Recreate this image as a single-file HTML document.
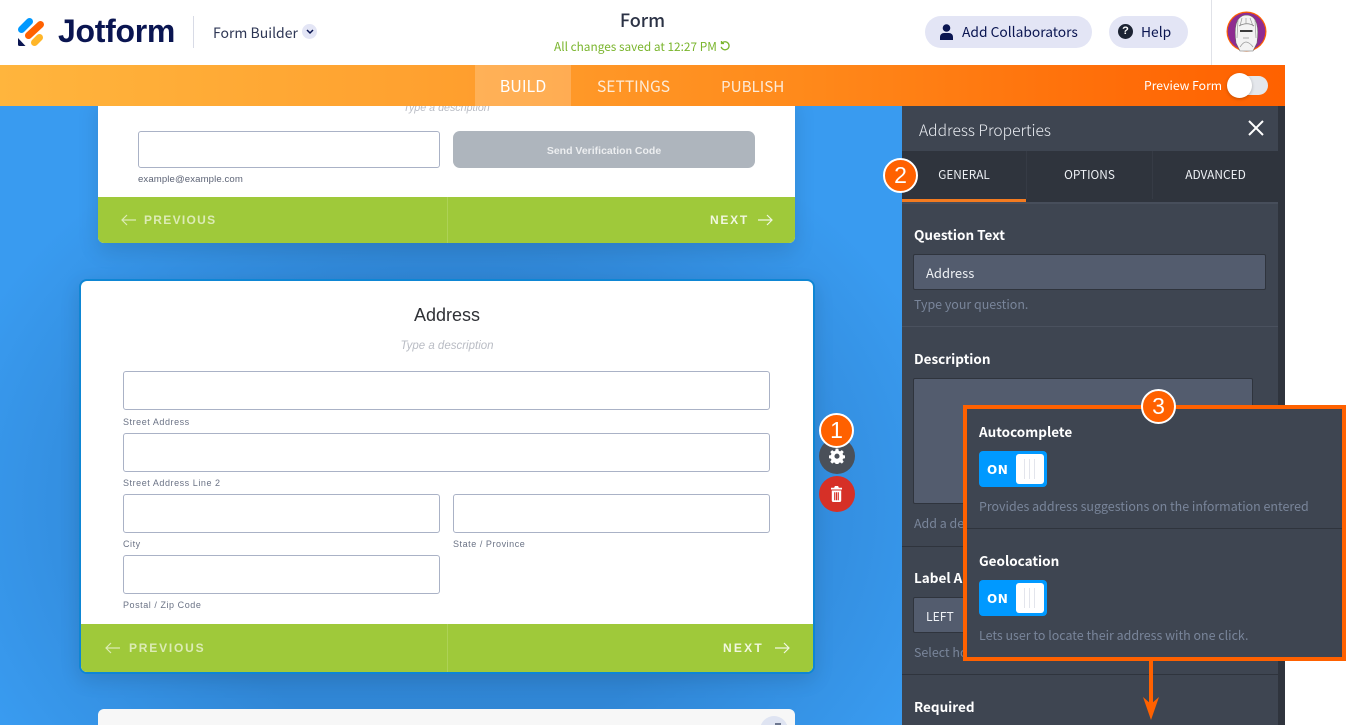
<!DOCTYPE html>
<html><head><meta charset="utf-8"><style>
html,body{margin:0;padding:0;background:#fff}
#p{position:relative;width:1346px;height:725px;overflow:hidden;background:#fff;font-family:"Liberation Sans",sans-serif}
#p div,#p svg,#p span.a{position:absolute}
.t{white-space:nowrap;line-height:1}
.n{font-family:"Noto Sans CJK SC","Liberation Sans",sans-serif}
.lb{font-family:"Noto Sans CJK SC","Liberation Sans",sans-serif;font-weight:700;color:#fff;font-size:13.5px;white-space:nowrap;line-height:1}
.h{font-family:"Noto Sans CJK SC","Liberation Sans",sans-serif;color:#79859a;font-size:12.45px;white-space:nowrap;line-height:1}
.i{background:#fff;border:1px solid #aab2c6;border-radius:3px;box-sizing:border-box}
.s{font-size:9px;color:#6a7285;white-space:nowrap;line-height:1;letter-spacing:.55px}
.nav{font-size:12px;font-weight:700;white-space:nowrap;line-height:1}
.c{border-radius:50%;background:#ff6100;border:2px solid #fff;box-sizing:border-box;color:#fff;text-align:center;font-size:23px;line-height:31px}
.tog{background:#0099ff;border-radius:4px;width:68px;height:36px}
.tk{left:37px;top:3px;width:28px;height:30px;background:#fff;border-radius:3px}
.tk i{position:absolute;top:5px;width:1px;height:20px;background:#e3e5ec}
.on{left:8px;top:13px;color:#fff;font:700 12px "DejaVu Sans",sans-serif;line-height:1;letter-spacing:.5px;white-space:nowrap}
</style></head><body><div id="p">

<!-- canvas -->
<div style="left:0;top:106px;width:902px;height:619px;background:radial-gradient(ellipse 520px 420px at 450px 400px,#2f84d2 0%,#3086d5 55%,#399bf0 100%)"></div>

<!-- top card -->
<div style="left:98px;top:96px;width:697px;height:147px;background:#fff;border-radius:6px;box-shadow:0 8px 22px rgba(0,0,0,.12);overflow:hidden">
  <div class="t" style="left:0;width:697px;top:7px;text-align:center;font-size:10.7px;font-style:italic;color:#b9bcc4">Type a description</div>
  <div class="i" style="left:40px;top:35px;width:302px;height:37px"></div>
  <div class="t" style="left:40px;top:79px;font-size:9.6px;color:#5d6476;letter-spacing:.1px">example@example.com</div>
  <div style="left:355px;top:35px;width:302px;height:37px;background:#aeb5bd;border-radius:7px"></div>
  <div class="t" style="left:355px;width:302px;top:49px;padding-top:1px;text-align:center;font-size:10.5px;font-weight:700;color:#eceef0">Send Verification Code</div>
  <div style="left:0;top:101px;width:697px;height:46px;background:#9fc93a"></div>
  <div style="left:349px;top:101px;width:1px;height:46px;background:#add256"></div>
  <svg style="left:23px;top:118px" width="15" height="12" viewBox="0 0 15 12" fill="none" stroke="#dcebb5" stroke-width="1.2"><path d="M15 6H1M6 1L1 6l5 5"/></svg>
  <div class="nav" style="left:46px;top:118px;color:#dcebb5;letter-spacing:1.3px">PREVIOUS</div>
  <div class="nav" style="left:612px;top:118px;color:#f1f7df;letter-spacing:1.75px">NEXT</div>
  <svg style="left:660px;top:118px" width="15" height="12" viewBox="0 0 15 12" fill="none" stroke="#f1f7df" stroke-width="1.2"><path d="M0 6h14M9 1l5 5-5 5"/></svg>
</div>

<!-- selected card -->
<div style="left:79px;top:279px;width:736px;height:395px;background:#0e86d4;border-radius:8px;box-shadow:0 6px 20px rgba(0,0,0,.12)"></div>
<div style="left:81px;top:281px;width:732px;height:391px;background:#fff;border-radius:6px;overflow:hidden">
  <div class="t" style="left:0;width:732px;top:25px;text-align:center;font-size:18px;color:#2f3136">Address</div>
  <div class="t" style="left:0;width:732px;top:59px;padding-top:1px;text-align:center;font-size:11.5px;font-style:italic;color:#b9bcc4">Type a description</div>
  <div class="i" style="left:42px;top:90px;width:647px;height:39px"></div>
  <div class="s" style="left:42px;top:137px">Street Address</div>
  <div class="i" style="left:42px;top:152px;width:647px;height:39px"></div>
  <div class="s" style="left:42px;top:198px">Street Address Line 2</div>
  <div class="i" style="left:42px;top:213px;width:317px;height:39px"></div>
  <div class="s" style="left:42px;top:259px">City</div>
  <div class="i" style="left:372px;top:213px;width:317px;height:39px"></div>
  <div class="s" style="left:372px;top:259px">State / Province</div>
  <div class="i" style="left:42px;top:274px;width:317px;height:39px"></div>
  <div class="s" style="left:42px;top:320px">Postal / Zip Code</div>
  <div style="left:-1px;top:343px;width:735px;height:48px;background:#9fc93a"></div>
  <div style="left:366px;top:343px;width:1px;height:48px;background:#add256"></div>
  <svg style="left:24px;top:361px" width="15" height="12" viewBox="0 0 15 12" fill="none" stroke="#dcebb5" stroke-width="1.2"><path d="M15 6H1M6 1L1 6l5 5"/></svg>
  <div class="nav" style="left:48px;top:361px;color:#dcebb5;letter-spacing:1.8px">PREVIOUS</div>
  <div class="nav" style="left:642px;top:361px;color:#f1f7df;letter-spacing:2.25px">NEXT</div>
  <svg style="left:693px;top:361px" width="16" height="12" viewBox="0 0 16 12" fill="none" stroke="#f1f7df" stroke-width="1.2"><path d="M1 6h14M10 1l5 5-5 5"/></svg>
</div>

<!-- bottom card -->
<div style="left:98px;top:709px;width:697px;height:30px;background:#f7f7f7;border-radius:6px 6px 0 0"></div>
<div style="left:760px;top:716px;width:28px;height:28px;border-radius:50%;background:#dfe4f2"></div>
<div style="left:775px;top:723px;width:6px;height:2px;background:#6d7790"></div>

<!-- side buttons -->
<div style="left:819px;top:438px;width:36px;height:36px;border-radius:50%;background:#4a5059"></div>
<svg style="left:829px;top:448px" width="16" height="16" viewBox="0 0 24 24"><path fill="#fff" fill-rule="evenodd" d="M10 1h4l.6 3.100 2 .9L19.300 3.200l2.800 2.800-1.800 2.700.9 2 3 .6v4l-3 .6-.9 2 1.800 2.700-2.800 2.800-2.700-1.800-2 .9-.6 3h-4l-.6-3-2-.9-2.700 1.800-2.800-2.800 1.800-2.700-.9-2-3-.6v-4l3-.6.9-2L1.900 6l2.800-2.800L7.400 5l2-.9zM12 8.500a3.800 3.800 0 1 0 0 7.600 3.800 3.800 0 0 0 0-7.600z"/></svg>
<div style="left:819px;top:476px;width:36px;height:36px;border-radius:50%;background:#d63027"></div>
<svg style="left:831px;top:486px" width="11" height="16" viewBox="0 0 14 18" preserveAspectRatio="none"><path fill="#fff" fill-rule="evenodd" d="M5 0h4l1 2h4v2H0V2h4zM1 5h12v11a2 2 0 0 1-2 2H3a2 2 0 0 1-2-2zM4 7v9h1.500V7zM6.300 7v9h1.400V7zM8.500 7v9H10V7z"/></svg>
<div class="c" style="left:819px;top:413px;width:35px;height:35px">1</div>

<!-- right panel -->
<div style="left:902px;top:106px;width:376px;height:619px;background:#3e4551"></div>
<div style="left:1278px;top:106px;width:7px;height:619px;background:#2f343d"></div>
<div class="t n" style="left:919px;top:123px;font-size:15.6px;font-weight:300;color:#e8ebf0">Address Properties</div>
<svg style="left:1247px;top:119px" width="18" height="18" viewBox="0 0 18 18" stroke="#fff" stroke-width="2" fill="none"><path d="M2 2l14 14M16 2L2 16"/></svg>
<div style="left:902px;top:151px;width:376px;height:51px;background:#2f343d"></div>
<div style="left:902px;top:199px;width:124px;height:3px;background:#f47b20"></div>
<div style="left:1026px;top:151px;width:1px;height:48px;background:#363b45"></div>
<div style="left:1152px;top:151px;width:1px;height:48px;background:#363b45"></div>
<div style="left:902px;top:202px;width:376px;height:2px;background:#474e5b"></div>
<div class="t n" style="left:902px;width:124px;top:169px;text-align:center;font-size:11.8px;color:#eef1f5">GENERAL</div>
<div class="t n" style="left:1027px;width:125px;top:169px;text-align:center;font-size:11.8px;color:#eef1f5">OPTIONS</div>
<div class="t n" style="left:1153px;width:125px;top:169px;text-align:center;font-size:11.9px;color:#eef1f5">ADVANCED</div>
<div class="c" style="left:883px;top:158px;width:35px;height:35px;font-size:23px">2</div>

<div class="lb" style="left:914px;top:228px">Question Text</div>
<div style="left:913px;top:254px;width:353px;height:36px;background:#535c6e;border:1px solid #2f343d;box-sizing:border-box;border-radius:2px"></div>
<div class="t n" style="left:926px;top:266px;font-size:13px;color:#eef1f5">Address</div>
<div class="h" style="left:914px;top:298px">Type your question.</div>
<div style="left:902px;top:326px;width:376px;height:1px;background:#4a515e"></div>
<div class="lb" style="left:914px;top:352px">Description</div>
<div style="left:913px;top:378px;width:340px;height:126px;background:#535c6e;border:1px solid #2f343d;box-sizing:border-box;border-radius:2px"></div>
<div class="h" style="left:914px;top:517px">Add a description</div>
<div style="left:902px;top:546px;width:376px;height:1px;background:#2f343d"></div>
<div class="lb" style="left:914px;top:571px">Label Alignment</div>
<div style="left:913px;top:597px;width:120px;height:36px;background:#535c6e;border:1px solid #2f343d;box-sizing:border-box;border-radius:2px"></div>
<div class="t n" style="left:926px;top:610px;font-size:12.2px;color:#eef1f5">LEFT</div>
<div class="h" style="left:914px;top:646px">Select how</div>
<div style="left:902px;top:674px;width:376px;height:1px;background:#2f343d"></div>
<div class="lb" style="left:914px;top:700px">Required</div>

<!-- header -->
<svg style="left:17px;top:17px" width="28" height="30" viewBox="0 0 28 30" fill="none" stroke-linecap="round" stroke-width="7">
  <path d="M4.500 12.500L12.500 4.500" stroke="#0099ff"/>
  <path d="M11.500 18.500L23.500 7.500" stroke="#ff6100"/>
  <path d="M17.500 25.500L22.500 20.500" stroke="#ffb629"/>
  <path d="M1 21L8.500 29H2.500A1.500 1.500 0 0 1 1 27.500z" fill="#0a1551" stroke="none"/>
</svg>
<div class="t" style="left:58px;top:15px;font-size:32px;font-weight:700;color:#0a1551;letter-spacing:-.3px">Jotform</div>
<div style="left:193px;top:16px;width:1px;height:32px;background:#d8dbe6"></div>
<div class="t n" style="left:213px;top:26px;font-size:14px;color:#2d3654">Form Builder</div>
<div style="left:302px;top:24px;width:15px;height:15px;border-radius:50%;background:#e3e5f5"></div>
<svg style="left:306px;top:29px" width="8" height="6" viewBox="0 0 8 6" fill="none" stroke="#0a1551" stroke-width="1.500"><path d="M1 1l3 3 3-3"/></svg>
<div class="t n" style="left:0;width:1285px;top:11px;text-align:center;font-size:18px;font-weight:500;color:#2b3245">Form</div>
<div class="t n" style="left:554px;top:41px;font-size:11.85px;color:#7ab52d">All changes saved at 12:27 PM</div>
<svg style="left:719px;top:40px" width="12" height="12" viewBox="0 0 12 12" fill="none" stroke="#7ab52d" stroke-width="1.300"><path d="M3 3.200a4 4 0 1 1-.8 3.600M2.500 1v2.500H5"/></svg>

<div style="left:925px;top:16px;width:167px;height:32px;border-radius:16px;background:#e3e5f5"></div>
<svg style="left:939px;top:24px" width="15" height="16" viewBox="0 0 15 16" fill="#0a1551"><circle cx="7.500" cy="4" r="3.800"/><path d="M1 16v-3a4 4 0 0 1 4-4h5a4 4 0 0 1 4 4v3z"/></svg>
<div class="t n" style="left:962px;top:25px;font-size:13.8px;color:#0a1551">Add Collaborators</div>
<div style="left:1109px;top:16px;width:79px;height:32px;border-radius:16px;background:#e3e5f5"></div>
<div style="left:1118px;top:24px;width:15px;height:15px;border-radius:50%;background:#1c2333;color:#fff;font-size:11px;font-weight:700;line-height:15px;text-align:center">?</div>
<div class="t n" style="left:1141px;top:25px;font-size:13.8px;color:#0a1551">Help</div>
<div style="left:1211px;top:0;width:1px;height:65px;background:#e0e2e8"></div>
<svg style="left:1226px;top:11px" width="41" height="41" viewBox="0 0 41 41">
  <circle cx="20.500" cy="20.500" r="20" fill="#ff6100"/><circle cx="20.500" cy="20.500" r="18.800" fill="#8e2b91"/>
  <path d="M10 32C8 18 9 5 20 4c12 0 13 14 11 28l-4 8H14z" fill="#f3f3f3" stroke="#666" stroke-width=".6"/>
  <path d="M13 15c5-3 11-3 15 0" stroke="#777" stroke-width=".8" fill="none"/>
  <path d="M14 20h4.500M22 20h4.500M18.500 20h3.500" stroke="#222" stroke-width="1.800" fill="none"/>
  <path d="M17 27h6M14 36c2-3 4-5 6-5s5 2 7 5M12 9l-1 18M29 9l1 18M20 7v6M16 7l-2 8M24 7l3 8" stroke="#999" stroke-width=".7" fill="none"/>
</svg>

<!-- orange nav -->
<div style="left:0;top:65px;width:1285px;height:41px;background:linear-gradient(90deg,#ffb53d 0%,#ff9f2e 36%,#ff8a1b 62%,#ff6c08 88%,#ff6100 100%)"></div>
<div style="left:475px;top:65px;width:96px;height:41px;background:rgba(255,255,255,.2)"></div>
<div class="t n" style="left:475px;width:96px;top:77px;text-align:center;font-size:16px;color:#fff">BUILD</div>
<div class="t n" style="left:597px;top:79px;font-size:15.6px;color:#fdebd8">SETTINGS</div>
<div class="t n" style="left:721px;top:79px;font-size:15.2px;color:#fdebd8">PUBLISH</div>
<div class="t n" style="left:1144px;top:79px;font-size:12.2px;color:#fff">Preview Form</div>
<div style="left:1228px;top:76px;width:40px;height:19px;border-radius:10px;background:#e4e7ec"></div>
<div style="left:1227px;top:73px;width:25px;height:25px;border-radius:50%;background:#fff;box-shadow:0 1px 3px rgba(0,0,0,.25)"></div>

<!-- annotation box -->
<div style="left:963px;top:405px;width:383px;height:256px;box-sizing:border-box;border:4px solid #ff6100;background:#3e4551"></div>
<div style="left:967px;top:528px;width:375px;height:1px;background:#2f343d"></div>
<div style="left:1149px;top:661px;width:4px;height:46px;background:#ff6100"></div>
<svg style="left:1143px;top:697px" width="16" height="24" viewBox="0 0 16 24"><path d="M0 0L8 7l8-7-8 23z" fill="#ff6100"/></svg>
<div class="c" style="left:1141px;top:389px;width:35px;height:35px">3</div>
<div class="lb" style="left:979px;top:425px">Autocomplete</div>
<div class="tog" style="left:979px;top:451px"><div class="on">ON</div><div class="tk"><i style="left:8px"></i><i style="left:13px"></i><i style="left:18px"></i></div></div>
<div class="h" style="left:979px;top:500px">Provides address suggestions on the information entered</div>
<div class="lb" style="left:979px;top:554px">Geolocation</div>
<div class="tog" style="left:979px;top:580px"><div class="on">ON</div><div class="tk"><i style="left:8px"></i><i style="left:13px"></i><i style="left:18px"></i></div></div>
<div class="h" style="left:979px;top:629px">Lets user to locate their address with one click.</div>

</div></body></html>
